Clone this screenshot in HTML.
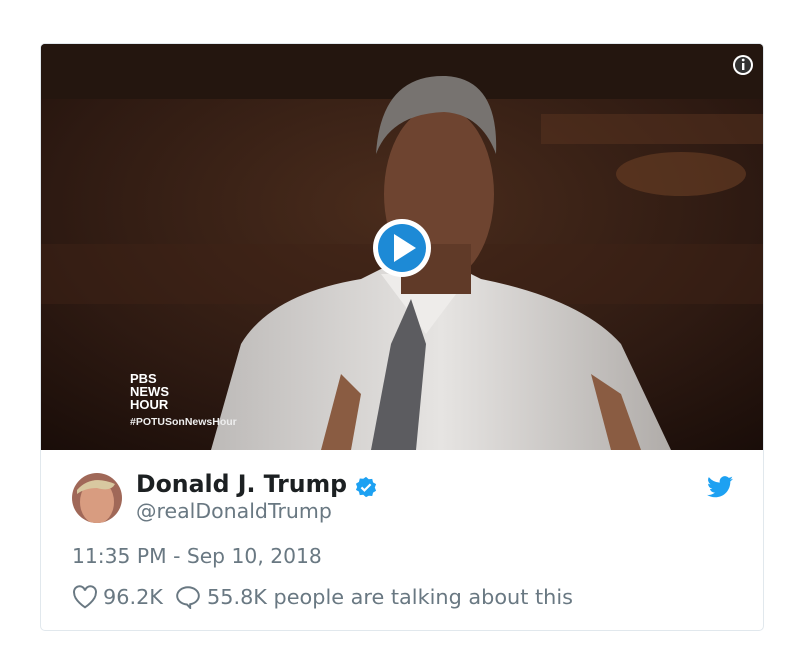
<!DOCTYPE html>
<html><head><meta charset="utf-8"><style>
body{margin:0;background:#fff;width:800px;height:661px;overflow:hidden;font-family:"DejaVu Sans","Liberation Sans",sans-serif;}
.card{position:absolute;left:40px;top:43px;width:722px;height:586px;border:1px solid #e1e8ed;border-radius:5px;overflow:hidden;background:#fff}
.t{position:absolute;white-space:nowrap}
</style></head><body>
<div class="card">
<svg width="722" height="406" style="position:absolute;left:0;top:0" viewBox="0 0 722 406">
<defs>
<radialGradient id="bg" cx="0.5" cy="0.4" r="0.8"><stop offset="0" stop-color="#4a2c1c"/><stop offset="0.6" stop-color="#2e1a12"/><stop offset="1" stop-color="#180c08"/></radialGradient>
<linearGradient id="sh" x1="0" y1="0" x2="1" y2="0"><stop offset="0" stop-color="#bdbab8"/><stop offset="0.5" stop-color="#e6e4e2"/><stop offset="1" stop-color="#b0aca9"/></linearGradient>
</defs>
<rect width="722" height="406" fill="url(#bg)"/>
<rect x="0" y="0" width="722" height="55" fill="#24160f"/>
<ellipse cx="640" cy="130" rx="65" ry="22" fill="#6a4024" opacity="0.6"/>
<rect x="500" y="70" width="222" height="30" fill="#5a3420" opacity="0.5"/>
<rect x="0" y="200" width="722" height="60" fill="#3e2216" opacity="0.5"/>
<path d="M170 406 L200 300 Q230 250 320 235 L340 225 L420 225 L440 235 Q540 255 580 300 L630 406 Z" fill="url(#sh)"/>
<path d="M340 230 L385 290 L430 230 Z" fill="#eeecea"/>
<path d="M370 255 L350 300 L330 406 L375 406 L385 300 Z" fill="#5c5c60"/>
<ellipse cx="398" cy="150" rx="55" ry="88" fill="#6e4430"/>
<path d="M335 110 Q340 30 405 32 Q458 35 455 110 Q440 70 403 68 Q350 70 335 110Z" fill="#777370"/>
<rect x="360" y="200" width="70" height="50" fill="#603a28"/>
<path d="M300 330 L320 350 L310 406 L280 406 Z" fill="#8a5c42"/>
<path d="M550 330 L580 350 L600 406 L570 406 Z" fill="#8a5c42"/>
<circle cx="361" cy="204" r="29" fill="#fff"/>
<circle cx="361" cy="204" r="24" fill="#1d8ad6"/>
<path d="M353 190 L375 204 L353 218 Z" fill="#fff"/>
<circle cx="702" cy="21" r="10" fill="#fff"/>
<circle cx="702" cy="21" r="8" fill="#333"/>
<rect x="701" y="19" width="2.4" height="7" fill="#fff"/>
<circle cx="702.2" cy="16" r="1.4" fill="#fff"/>
<text x="89" y="339" fill="#fff" font-family="Liberation Sans" font-weight="bold" font-size="13">PBS</text>
<text x="89" y="352" fill="#fff" font-family="Liberation Sans" font-weight="bold" font-size="13">NEWS</text>
<text x="89" y="365" fill="#fff" font-family="Liberation Sans" font-weight="bold" font-size="13">HOUR</text>
<text x="89" y="381" fill="#eee" font-family="Liberation Sans" font-weight="bold" font-size="10.5">#POTUSonNewsHour</text>
</svg>
<svg width="52" height="52" style="position:absolute;left:30px;top:428px"><defs><clipPath id="c"><circle cx="26" cy="26" r="25"/></clipPath></defs><g clip-path="url(#c)"><rect width="52" height="52" fill="#a06858"/><ellipse cx="26" cy="30" rx="17" ry="22" fill="#d89c80"/><path d="M6 18 Q20 2 44 12 Q40 20 26 16 Q14 16 6 22Z" fill="#d8c8a0"/></g></svg>
<div class="t" style="left:95px;top:426px;font-size:23.6px;font-weight:bold;color:#1c2022">Donald J. Trump</div>
<svg style="position:absolute;left:314px;top:432px" width="22" height="22" viewBox="0 0 24 24"><path d="M12 1l3 2.5 3.8-.3.9 3.7 3.3 2-1.4 3.6 1.4 3.6-3.3 2-.9 3.7-3.8-.3L12 23l-3-2.5-3.8.3-.9-3.7-3.3-2L2.4 12 1 8.4l3.3-2 .9-3.7 3.8.3z" fill="#1da1f2"/><path d="M7 12.5l3.3 3.2L17 9" stroke="#fff" stroke-width="2.4" fill="none"/></svg>
<div class="t" style="left:95px;top:455px;font-size:20.5px;color:#697882">@realDonaldTrump</div>
<svg style="position:absolute;left:666px;top:432px" width="26" height="22" viewBox="0 0 24 20"><path d="M24 2.4a9.8 9.8 0 0 1-2.8.8A4.9 4.9 0 0 0 23.3.4a9.8 9.8 0 0 1-3.1 1.2A4.9 4.9 0 0 0 11.8 6 14 14 0 0 1 1.7.9a4.9 4.9 0 0 0 1.5 6.6A4.9 4.9 0 0 1 1 6.9a4.9 4.9 0 0 0 3.9 4.8 4.9 4.9 0 0 1-2.2.1 4.9 4.9 0 0 0 4.6 3.4A9.9 9.9 0 0 1 0 17.3 14 14 0 0 0 7.5 19.5c9.1 0 14-7.5 14-14v-.6A10 10 0 0 0 24 2.4z" fill="#1da1f2"/></svg>
<div class="t" style="left:31px;top:500px;font-size:20.3px;color:#697882">11:35 PM - Sep 10, 2018</div>
<svg style="position:absolute;left:31px;top:541px" width="26" height="24" viewBox="0 0 24 22"><path d="M12 20.5S2 14 2 7.5A5 5 0 0 1 12 5a5 5 0 0 1 10 2.5C22 14 12 20.5 12 20.5z" fill="none" stroke="#697882" stroke-width="1.8"/></svg>
<div class="t" style="left:62px;top:541px;font-size:20.8px;color:#697882">96.2K</div>
<svg style="position:absolute;left:134px;top:541px" width="26" height="24" viewBox="0 0 24 22"><path d="M12 2C6.5 2 2 5.6 2 10c0 4.2 4 7.5 9 7.9L14 21v-3.3c4.5-.8 8-3.9 8-7.7C22 5.6 17.5 2 12 2z" fill="none" stroke="#697882" stroke-width="1.8"/></svg>
<div class="t" style="left:166px;top:541px;font-size:20.8px;color:#697882">55.8K people are talking about this</div>
</div>
</body></html>
